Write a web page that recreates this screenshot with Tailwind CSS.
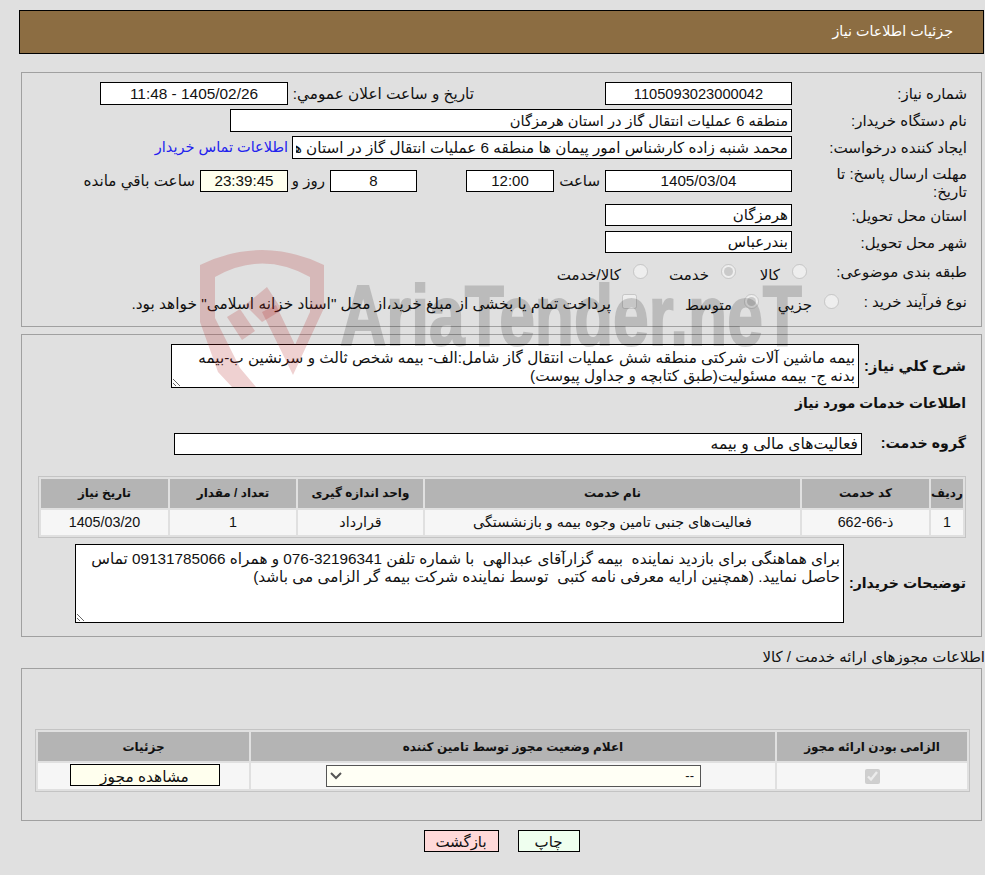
<!doctype html>
<html lang="fa" dir="rtl">

<head>
  <meta charset="utf-8">
  <title>جزئیات اطلاعات نیاز</title>
  <meta name="viewport" content="width=device-width, initial-scale=1">
  <script src="https://cdn.jsdelivr.net/npm/@tailwindcss/browser@4"></script>
</head>

<body class="relative m-0 h-[875px] w-[985px] overflow-hidden bg-[#e0e0e0] font-['Liberation_Sans','DejaVu_Sans',sans-serif] text-[15px] text-[#111]">

  <!-- header -->
  <div class="mr-px mt-[10px] flex h-[44px] w-[965px] items-center border border-black bg-[#8c6d42] pr-[30px] text-[14.3px] text-white">
    جزئیات اطلاعات نیاز
  </div>

  <!-- main info -->
  <section class="mr-[3px] mt-[18px] h-[255px] w-[961px] border border-[#a0a0a0] pr-[14px] pt-[9px]">
    <div class="flex h-[23px] items-center">
      <div class="w-[175px] pt-[2px]">شماره نیاز:</div>
      <input readonly value="1105093023000042" class="h-[23px] w-[187px] border border-black bg-white text-center text-[14.67px]">
      <div class="w-[317px] pr-[131px] pt-[1px] whitespace-nowrap text-[15.3px]">تاریخ و ساعت اعلان عمومي:</div>
      <input readonly value="1405/02/26 - 11:48" class="h-[23px] w-[188px] border border-black bg-white text-center text-[15.4px]">
    </div>
    <div class="mt-[4px] flex h-[23px] items-center">
      <div class="w-[175px] pt-[2px]">نام دستگاه خریدار:</div>
      <input readonly value="منطقه 6 عملیات انتقال گاز در استان هرمزگان" class="h-[23px] w-[562px] border border-black bg-white px-[3px] text-[14.67px]">
    </div>
    <div class="mt-[4px] flex h-[23px] items-center">
      <div class="w-[175px] pt-[2px] text-[15.2px]">ایجاد کننده درخواست:</div>
      <input readonly value="محمد شنبه زاده کارشناس امور پیمان ها منطقه 6 عملیات انتقال گاز در استان هرمزگان" class="h-[23px] w-[500px] border border-black bg-white px-[3px] text-[15.2px]">
      <a href="#" class="mr-[4px] whitespace-nowrap pt-[1px] text-[14.5px] text-[#2222ee]">اطلاعات تماس خریدار</a>
    </div>
    <div class="mt-[5px] flex h-[35px] items-center">
      <div class="w-[175px] pl-[35px] pt-[2px] leading-[18px]">مهلت ارسال پاسخ: تا تاریخ:</div>
      <div class="flex items-center whitespace-nowrap">
        <input readonly value="1405/03/04" class="h-[22px] w-[187px] border border-black bg-white text-center text-[15.2px]">
        <div class="w-[51px] pr-[5px]">ساعت</div>
        <input readonly value="12:00" class="h-[22px] w-[88px] border border-black bg-white text-center">
        <div class="w-[49px]"></div>
        <input readonly value="8" class="h-[22px] w-[87px] border border-black bg-white text-center">
        <div class="w-[42px] pr-[5px]">روز و</div>
        <input readonly value="23:39:45" class="h-[22px] w-[88px] border border-black bg-[#ffffee] text-center text-[15.2px]">
        <div class="pr-[5px] text-[15.2px]">ساعت باقي مانده</div>
      </div>
    </div>
    <div class="mt-[5px] flex h-[22px] items-center">
      <div class="w-[175px] pt-[2px]">استان محل تحویل:</div>
      <input readonly value="هرمزگان" class="h-[22px] w-[187px] border border-black bg-white px-[3px]">
    </div>
    <div class="mt-[5px] flex h-[22px] items-center">
      <div class="w-[175px] pt-[2px]">شهر محل تحویل:</div>
      <input readonly value="بندرعباس" class="h-[22px] w-[187px] border border-black bg-white px-[3px]">
    </div>
    <div class="mt-[7px] flex h-[23px] items-center">
      <div class="w-[160px] pt-[2px]">طبقه بندی موضوعی:</div>
      <label class="flex w-[71px] items-center gap-[12px]"><input type="radio" disabled class="m-0 size-[15px]"><span class="mt-[8px]">کالا</span></label>
      <label class="flex w-[88px] items-center gap-[12px]"><input type="radio" disabled checked class="m-0 size-[15px]"><span class="mt-[8px]">خدمت</span></label>
      <label class="flex items-center gap-[12px]"><input type="radio" disabled class="m-0 size-[15px]"><span class="mt-[8px]">کالا/خدمت</span></label>
    </div>
    <div class="mt-[7px] flex h-[23px] items-center whitespace-nowrap">
      <div class="w-[128px] pt-[2px]">نوع فرآیند خرید :</div>
      <label class="flex w-[80px] items-center gap-[12px]"><input type="radio" disabled class="m-0 size-[15px]"><span class="mt-[8px]">جزيي</span></label>
      <label class="flex w-[122px] items-center gap-[12px]"><input type="radio" disabled checked class="m-0 size-[15px]"><span class="mt-[8px]">متوسط</span></label>
      <label class="flex items-center gap-[11px]"><input type="checkbox" disabled class="m-0 size-[15px]"><span class="mt-[5px] text-[15.4px]">پرداخت تمام یا بخشی از مبلغ خرید،از محل "اسناد خزانه اسلامی" خواهد بود.</span></label>
    </div>
  </section>

  <!-- description -->
  <section class="mr-[3px] mt-[7px] h-[303px] w-[961px] border border-[#a0a0a0] pr-[15px] pt-[9px]">
    <div class="flex items-center">
      <div class="w-[107px] text-[14.67px] font-bold">شرح کلي نیاز:</div>
      <textarea readonly class="h-[44px] w-[688px] border border-black bg-white px-[3px] pt-[4px] text-[15.3px] leading-[18px]">بیمه ماشین آلات شرکتی منطقه شش عملیات انتقال گاز شامل:الف- بیمه شخص ثالث و سرنشین ب-بیمه بدنه ج- بیمه مسئولیت(طبق کتابچه و جداول پیوست)</textarea>
    </div>
    <div class="mt-[5px] text-[13.9px] font-bold">اطلاعات خدمات مورد نیاز</div>
    <div class="mt-[19px] flex items-center">
      <div class="w-[104px] text-[14.2px] font-bold">گروه خدمت:</div>
      <input readonly value="فعالیت‌های مالی و بیمه" class="h-[22px] w-[688px] border border-black bg-white px-[3px] text-[15.6px]">
    </div>
    <table class="mt-[21px] w-[928px] table-fixed border-separate border-spacing-[2px] border border-[#c4c4c4] text-center text-[14.3px]">
      <thead>
        <tr class="h-[29px] bg-[#b4b4b4] text-[12px] font-bold">
          <th class="w-[32px]">ردیف</th>
          <th class="w-[127px]">کد خدمت</th>
          <th class="w-[375px]">نام خدمت</th>
          <th class="w-[125px]">واحد اندازه گیری</th>
          <th class="w-[126px]">تعداد / مقدار</th>
          <th>تاریخ نیاز</th>
        </tr>
      </thead>
      <tbody>
        <tr class="h-[25px] bg-[#f6f6f6]">
          <td>1</td>
          <td>ذ-66-662</td>
          <td class="whitespace-nowrap">فعالیت‌های جنبی تامین وجوه بیمه و بازنشستگی</td>
          <td>قرارداد</td>
          <td>1</td>
          <td>1405/03/20</td>
        </tr>
      </tbody>
    </table>
    <div class="mt-[6px] flex items-center">
      <div class="w-[122px] whitespace-nowrap text-[14.1px] font-bold">توضیحات خریدار:</div>
      <textarea readonly class="h-[79px] w-[769px] border border-black bg-white px-[3px] pt-[5px] text-[15.3px] leading-[18px]">برای هماهنگی برای بازدید نماینده  بیمه گزارآقای عبدالهی  با شماره تلفن 32196341-076 و همراه 09131785066 تماس حاصل نمایید. (همچنین ارایه معرفی نامه کتبی  توسط نماینده شرکت بیمه گر الزامی می باشد)</textarea>
    </div>
  </section>

  <div class="mt-[8px] h-[23px] leading-[23px]">اطلاعات مجوزهای ارائه خدمت / کالا</div>

  <!-- permits -->
  <section class="mr-[3px] h-[153px] w-[961px] border border-[#a0a0a0] pr-[11px] pt-[60px]">
    <table class="w-[935px] table-fixed border-separate border-spacing-[2px] border border-[#c4c4c4] text-center">
      <thead>
        <tr class="h-[29px] bg-[#b4b4b4] text-[12px] font-bold">
          <th class="w-[190px]">الزامی بودن ارائه مجوز</th>
          <th class="w-[524px]">اعلام وضعیت مجوز توسط تامین کننده</th>
          <th>جزئیات</th>
        </tr>
      </thead>
      <tbody>
        <tr class="h-[26px] bg-[#f6f6f6]">
          <td><input type="checkbox" checked disabled class="m-0 size-[15px] align-middle"></td>
          <td>
            <div class="relative mr-[74px] h-[22px] w-[375px]">
              <select class="block h-[22px] w-full appearance-none border border-[#555] bg-[#fffff5] px-[6px] text-[13px]"><option>--</option></select>
              <svg class="pointer-events-none absolute left-[4px] top-[7px]" width="12" height="8" viewBox="0 0 12 8"><path d="M1 1 L6 6 L11 1" fill="none" stroke="#555" stroke-width="2"/></svg>
            </div>
          </td>
          <td>
            <button class="ml-[2px] h-[22px] w-[150px] border border-black bg-[#ffffee] text-[15.4px]">مشاهده مجوز</button>
          </td>
        </tr>
      </tbody>
    </table>
  </section>

  <!-- buttons -->
  <div class="mt-[9px] flex justify-center gap-[19px] pl-[18px]">
    <button class="h-[22px] w-[62px] border border-black bg-[#efffef]">چاپ</button>
    <button class="h-[22px] w-[75px] border border-black bg-[#ffd9d9]">بازگشت</button>
  </div>

  <!-- watermark, lies over the page -->
  <svg class="pointer-events-none absolute left-0 top-0 [direction:ltr]" width="985" height="875">
    <path fill="#b01818" fill-opacity="0.2" d="M200 265 Q262 235 324 265 L324 308 L293 375 L262 312 L276 305 L295 345 L310 312 L310 277 Q262 250 215 277 L215 318 L240 368 L256 387 L232 387 L218 372 L200 322 Z"/>
    <polygon fill="#b01818" fill-opacity="0.2" points="227,317 240,309 255,331 242,340"/>
    <polygon fill="#b01818" fill-opacity="0.2" points="245,305 267,287 282,310 262,322"/>
    <g opacity="0.16">
      <text x="340" y="345" textLength="462" lengthAdjust="spacingAndGlyphs" font-family="Liberation Sans" font-weight="700" font-size="86" fill="#000" stroke="#000" stroke-width="2">AriaTender.neT</text>
    </g>
  </svg>
</body>

</html>
